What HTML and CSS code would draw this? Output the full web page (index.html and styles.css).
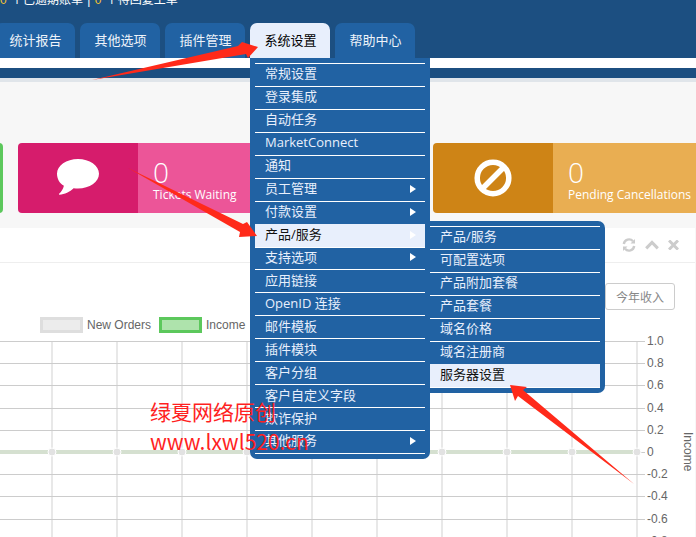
FILE: index.html
```html
<!DOCTYPE html>
<html lang="zh-CN">
<head>
<meta charset="utf-8">
<title>系统设置</title>
<link rel="stylesheet" href="styles.css">
</head>
<body>
<div class="page">
  <header class="header">
    <p class="notice"><b>0</b> 个已逾期账单 | <b>0</b> 个待回复工单</p>
    <nav class="tabs">
      <a class="tab">统计报告</a>
      <a class="tab">其他选项</a>
      <a class="tab">插件管理</a>
      <a class="tab tab-active">系统设置</a>
      <a class="tab">帮助中心</a>
    </nav>
  </header>
  <div class="white-band"></div>
  <div class="blue-band"></div>
  <div class="grey-band"></div>
  <section class="summary">
    <div class="card card-green">
      <div class="card-icon"></div>
      <div class="card-body"></div>
    </div>
    <div class="card card-pink">
      <div class="card-icon">
        <svg class="icon-big" width="44" height="38" viewBox="0 0 44 38"><path fill="#fff" d="M22 0C33.6 0 43 6.600 43 14.800 43 23 33.600 29.500 22 29.500c-1.500 0-3-.1-4.400-.3C14 32.800 8.500 35.300 3.500 35.700c-.6 0-.8-.5-.4-.9 2.200-2 4-4.500 4.800-8C3.400 24.200 1 19.800 1 14.800 1 6.600 10.400 0 22 0z"/></svg>
      </div>
      <div class="card-body">
        <div class="card-num">0</div>
        <div class="card-label">Tickets Waiting</div>
      </div>
    </div>
    <div class="card card-orange">
      <div class="card-icon">
        <svg class="icon-big" width="38" height="38" viewBox="0 0 38 38"><circle cx="19" cy="19" r="15.800" fill="none" stroke="#fff" stroke-width="5.500"/><path d="M8 30L30 8" stroke="#fff" stroke-width="5.500"/></svg>
      </div>
      <div class="card-body">
        <div class="card-num">0</div>
        <div class="card-label">Pending Cancellations</div>
      </div>
    </div>
  </section>
  <section class="panel">
    <div class="panel-head">
      <svg width="14" height="14" viewBox="0 0 14 14" fill="none" stroke="#ccc" stroke-width="2.400"><path d="M1.800 6A5.300 5.300 0 0 1 11 3.200"/><path d="M12.200 8A5.300 5.300 0 0 1 3 10.800"/><path d="M13 1v4.600H8.500z" fill="#ccc" stroke="none"/><path d="M1 13V8.400h4.500z" fill="#ccc" stroke="none"/></svg>
      <svg width="14" height="10" viewBox="0 0 14 10" fill="none" stroke="#ccc" stroke-width="3"><path d="M1.200 8.400L7 2.400l5.800 6"/></svg>
      <svg width="11" height="10" viewBox="0 0 11 10" fill="none" stroke="#ccc" stroke-width="3"><path d="M1 .5l9 9M10 .5l-9 9"/></svg>
    </div>
    <div class="panel-tools"><button class="range-btn">今年收入</button></div>
    <div class="legend">
      <span class="legend-box legend-grey"></span><span class="legend-text">New Orders</span>
      <span class="legend-box legend-green"></span><span class="legend-text">Income</span>
    </div>
    <svg class="chart" width="696" height="204" viewBox="0 333 696 204">
      <g stroke="#e8e8e8" stroke-width="2">
        <path d="M52 341V537M117 341V537M182 341V537M247 341V537M312 341V537M377 341V537M442 341V537M507 341V537M572 341V537M637 341V537"/>
      </g>
      <g stroke="#ccc" stroke-width="1">
        <path d="M0 341.500H645M0 363.500H645M0 385.500H645M0 408.500H645M0 430.500H645M0 474.500H645M0 496.500H645M0 519.500H645"/>
        <path d="M637 452.500H645"/>
      </g>
      <path d="M0 452H637" stroke="#d5e0d0" stroke-width="4"/>
      <g fill="#e2e2e2" stroke="#fff" stroke-width="1">
        <circle cx="52" cy="452" r="4"/><circle cx="117" cy="452" r="4"/><circle cx="182" cy="452" r="4"/><circle cx="247" cy="452" r="4"/><circle cx="442" cy="452" r="4"/><circle cx="507" cy="452" r="4"/><circle cx="572" cy="452" r="4"/><circle cx="637" cy="452" r="4"/>
      </g>
      <g class="tick">
        <text x="647" y="345">1.0</text>
        <text x="647" y="367">0.8</text>
        <text x="647" y="389">0.6</text>
        <text x="647" y="412">0.4</text>
        <text x="647" y="434">0.2</text>
        <text x="647" y="456">0</text>
        <text x="647" y="478">-0.2</text>
        <text x="647" y="500">-0.4</text>
        <text x="647" y="523">-0.6</text>
        <text x="647" y="545">-0.8</text>
        <text class="axis-title" transform="translate(684 432) rotate(90)">Income</text>
      </g>
    </svg>
  </section>

  <ul class="menu">
    <li class="item">常规设置</li>
    <li class="item">登录集成</li>
    <li class="item">自动任务</li>
    <li class="item">MarketConnect</li>
    <li class="item">通知</li>
    <li class="item has-sub">员工管理</li>
    <li class="item has-sub">付款设置</li>
    <li class="item has-sub item-on">产品/服务</li>
    <li class="item has-sub">支持选项</li>
    <li class="item">应用链接</li>
    <li class="item">OpenID 连接</li>
    <li class="item">邮件模板</li>
    <li class="item">插件模块</li>
    <li class="item">客户分组</li>
    <li class="item">客户自定义字段</li>
    <li class="item">欺诈保护</li>
    <li class="item has-sub">其他服务</li>
  </ul>
  <ul class="menu submenu">
    <li class="item">产品/服务</li>
    <li class="item">可配置选项</li>
    <li class="item">产品附加套餐</li>
    <li class="item">产品套餐</li>
    <li class="item">域名价格</li>
    <li class="item">域名注册商</li>
    <li class="item item-on">服务器设置</li>
  </ul>

  <div class="watermark">
    <div class="wm-cn">绿夏网络原创</div>
    <div class="wm-url">www.lxwl520.cn</div>
  </div>
  <svg class="arrows" width="696" height="537" viewBox="0 0 696 537">
    <polygon fill="#ff2a1a" points="92,80 238,46 242,42 258,47 248,58 246,54"/>
    <polygon fill="#ff2a1a" points="128,168 243,224 247,222 257,236 239,237 240,232"/>
    <polygon fill="#ff2a1a" points="634,484 523,390 527,387 510,385 515,401 518,396"/>
  </svg>
</div>
</body>
</html>
```
FILE: styles.css
```css
* { box-sizing: border-box; }
html, body { margin: 0; padding: 0; }
body { background: #fff; font-family: "Open Sans", "Noto Sans CJK SC", sans-serif; }

.page {
  position: relative;
  width: 696px;
  height: 537px;
  overflow: hidden;
  display: flex;
  flex-direction: column;
  background: #f7f7f7;
}

.header { height: 58px; background: #1c4f81; flex: none; display: flex; flex-direction: column; }
.notice {
  margin: -8px 0 0;
  height: 31px;
  font: 12px/17px "Liberation Sans", "Noto Sans CJK SC", sans-serif;
  word-spacing: 1px;
  color: #fff;
  white-space: nowrap;
}
.notice b { font-weight: 400; color: #f4c430; }

.tabs { display: flex; gap: 5px; margin-left: -5px; }
.tab {
  width: 80px;
  height: 35px;
  display: flex;
  align-items: center;
  justify-content: center;
  padding: 0 0 2px 1px;
  background: #2162a3;
  border-radius: 7px 7px 0 0;
  color: #eef3fa;
  font: 13px/1 "Noto Sans CJK SC", sans-serif;
}
.tab-active { background: #e8effc; color: #000; }

.white-band { height: 10px; background: #fff; flex: none; }
.blue-band { height: 10px; background: #1c4f81; flex: none; }
.grey-band { height: 4px; background: #e0e5ea; flex: none; }

.summary {
  flex: none;
  height: 146px;
  padding-top: 61px;
  margin-left: -397px;
  display: flex;
  gap: 15px;
}
.card { flex: none; width: 400px; height: 70px; display: flex; border-radius: 4px; overflow: hidden; color: #fff; }
.card-icon { width: 120px; flex: none; display: flex; align-items: center; justify-content: center; }
.card-body { flex: 1; padding: 12px 0 0 15px; }
.card-num { font-size: 28px; font-weight: 300; line-height: 34px; }
.card-label { font-size: 12px; line-height: 16px; white-space: nowrap; margin-top: -2px; }
.card-green { background: #5cc85c; }
.card-pink .card-icon { background: #d61c6c; }
.card-pink .card-body { background: #ec5598; }
.card-orange .card-icon { background: #ce8416; }
.card-orange .card-body { background: #e9ae52; }

.panel { flex: 1; margin-right: 1px; background: #fff; min-height: 0; }
.panel-head {
  height: 35px;
  border-bottom: 1px solid #eee;
  display: flex;
  align-items: center;
  justify-content: flex-end;
  gap: 9px;
  padding-right: 16px;
}
.panel-tools { display: flex; justify-content: flex-end; padding: 20px 20px 0 0; }
.range-btn {
  width: 70px;
  height: 27px;
  padding: 0;
  background: #fff;
  border: 1px solid #ccc;
  border-radius: 3px;
  color: #888;
  font: 12px/1 "Noto Sans CJK SC", sans-serif;
}
.legend { display: flex; align-items: center; height: 16px; margin-top: 7px; padding-left: 40px; }
.legend-box { width: 43px; height: 16px; border: 3px solid; flex: none; }
.legend-grey { background: #ececec; border-color: #dedede; }
.legend-green { background: #aee3ac; border-color: #5cc85c; }
.legend-text { font: 12px/16px "Liberation Sans", sans-serif; color: #666; margin: 0 8px 0 4px; }

.chart { display: block; }
.tick text { font: 12px "Liberation Sans", sans-serif; fill: #666; }

.menu {
  position: absolute;
  left: 250px;
  top: 58px;
  width: 180px;
  margin: 0;
  padding: 5px;
  list-style: none;
  background: #2162a3;
  border-radius: 0 0 7px 7px;
}
.item {
  height: 22.94px;
  border-top: 1px solid #fff;
  padding: 0 9px 2px 10px;
  display: flex;
  align-items: center;
  justify-content: space-between;
  color: #e8effc;
  font: 13px/1 "Open Sans", "Noto Sans CJK SC", sans-serif;
  white-space: nowrap;
}
.menu .item:last-child { height: 23.94px; border-bottom: 1px solid #fff; }
.has-sub::after {
  content: "";
  border-left: 6px solid #fff;
  border-top: 4px solid transparent;
  border-bottom: 4px solid transparent;
}
.item-on { background: #e8effc; color: #111; border-top-color: #e8effc; }
.menu .item-on:last-child { border-bottom-color: #fff; }

.submenu {
  left: 430px;
  top: 221px;
  width: 175px;
  padding-left: 0;
  border-radius: 0 7px 7px 0;
}

.watermark { position: absolute; left: 150px; top: 396px; color: #ff1f1f; font-family: "Noto Sans CJK SC", sans-serif; font-weight: 400; white-space: nowrap; }
.wm-cn { font-size: 21px; line-height: 30px; }
.wm-url { font-size: 21px; line-height: 30px; }
.arrows { position: absolute; left: 0; top: 0; pointer-events: none; }
```
